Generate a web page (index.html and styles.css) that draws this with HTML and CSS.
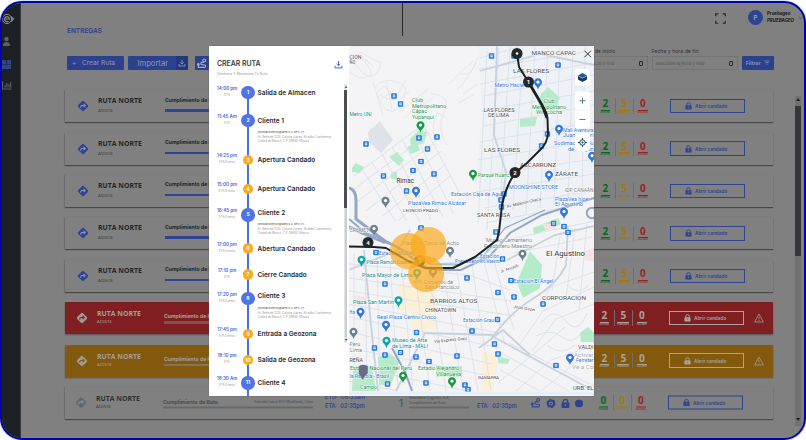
FILE: index.html
```html
<!DOCTYPE html>
<html lang="es">
<head>
<meta charset="utf-8">
<title>Entregas</title>
<link rel="stylesheet" href="styles.css">
</head>
<body>
<svg class="defs" width="0" height="0">
  <symbol id="turn" viewBox="0 0 12 12"><rect x="2" y="2" width="8" height="8" rx="1.3" transform="rotate(45 6 6)" fill="currentColor"/><path style="stroke:var(--arrow)" d="M3.8 7.8V6.500Q3.800 5.500 4.800 5.500H8M6.600 3.900L8.200 5.500L6.600 7.100" fill="none" stroke-width="1.1"/></symbol>
  <symbol id="lock" viewBox="0 0 8 9"><path d="M2 4V2.7a2 2 0 0 1 4 0V4" fill="none" stroke="currentColor" stroke-width="1.1"/><rect x=".5" y="3.6" width="7" height="5" rx=".8" fill="currentColor"/><circle class="hole" cx="4" cy="6" r=".8"/></symbol>
  <symbol id="warn" viewBox="0 0 10 10"><path d="M5 1L9.4 9H.6Z" fill="none" stroke="currentColor" stroke-width=".8" stroke-linejoin="round"/><path d="M5 3.8V6.3M5 7.2V8" stroke="currentColor" stroke-width=".8"/></symbol>
  <symbol id="load" viewBox="0 0 10 10"><path d="M5 1V6M2.9 4.3L5 6.3L7.1 4.3M1.2 6.3V8.8H8.8V6.3" fill="none" stroke="currentColor" stroke-width="1.1"/></symbol>
  <symbol id="route" viewBox="0 0 12 12"><circle cx="9" cy="2.6" r="1.6" fill="none" stroke="currentColor" stroke-width="1.1"/><circle cx="2.5" cy="7" r="1.5" fill="currentColor"/><path d="M2.5 7V10.2H9.2Q11 10 10.4 8.2Q10 7.3 8 7.3H6.3Q5 7 5.3 5.7Q5.7 4.5 7.2 4.5H9" fill="none" stroke="currentColor" stroke-width="1.2"/></symbol>
  <symbol id="bus" viewBox="-3 -3 6 6"><rect x="-2.8" y="-2.8" width="5.6" height="5.6" rx="1" fill="#2879e2"/><rect x="-1.2" y="-1.6" width="2.4" height="2.8" rx=".5" fill="#e8f1ff"/><path d="M-.8 -.2H.8" stroke="#2879e2" stroke-width=".7"/></symbol>
  <symbol id="pin" viewBox="-5 -5 10 13"><path d="M0 7Q-.5 4.5-2.6 2.8A4 4 0 1 1 2.6 2.8Q.5 4.5 0 7Z" fill="currentColor"/><circle cy="-.4" r="1.6" fill="#fff"/></symbol>
</svg>
<div class="frame">
  <nav class="side">
    <svg viewBox="0 0 18 90" width="18" height="90">
      <g fill="none" stroke="#8a8d8e"><circle cx="5" cy="9" r="4.6" stroke-width="1"/><path d="M2.5 9H7.5A2.5 2.5 0 1 0 6.5 11.2M9 6.5L11.5 9L9 11.5" stroke-width="1.2"/></g>
      <g fill="#5d6162"><circle cx="4.5" cy="29" r="2.3"/><path d="M.8 36Q1 32 4.5 32Q8 32 8.2 36Z"/></g>
      <path d="M0 50H4V53.500H5V50H9V54H0ZM0 54.500H9V59H0Z" fill="#2f448d"/>
      <path d="M.5 71V79H9.5M3 77.5V75M5 77.5V73M7 77.5V74M8.7 77.5V72" fill="none" stroke="#5d6162" stroke-width="1.1"/>
    </svg>
  </nav>
  <main class="main">
    <header class="top">
      <i class="divider"></i>
      <svg class="expand" viewBox="0 0 10 10"><path d="M3 .7H.7V3M7 .7H9.3V3M3 9.3H.7V7M7 9.3H9.3V7" fill="none" stroke="#23272a" stroke-width="1.1"/></svg>
      <b class="avatar">P</b>
      <div class="user"><b>Pruebageo</b><b><i>PRUEBAGEO</i></b></div>
      <svg class="chev" viewBox="0 0 6 4"><path d="M.5 .5L3 3L5.5 .5" fill="none" stroke="#333" stroke-width=".7"/></svg>
    </header>
    <section class="tools">
      <div class="tools-left">
        <h1>ENTREGAS</h1>
        <div class="btns">
          <div class="btn new"><span>+</span>Crear Ruta</div>
          <div class="btn imp"><span>Importar</span><i><svg width="8" height="8"><use href="#load"/></svg></i></div>
          <div class="btn ico"><svg width="11" height="11"><use href="#route"/></svg></div>
        </div>
      </div>
      <div class="filters">
        <div class="field first"><label>Fecha y hora de inicio</label><div class="input"><i>Seleccione la fecha y hora</i><em></em></div></div>
        <div class="field"><label>Fecha y hora de fin</label><div class="input"><i>Seleccione la fecha y hora</i><em></em></div></div>
        <div class="btn filter">Filtrar<svg width="6" height="6" viewBox="0 0 6 6"><path d="M.2 1H5.8M1.2 2.6H4.8M2.2 4.2H3.8" stroke="#7c88b5" stroke-width=".8"/></svg></div>
      </div>
    </section>
    <div class="body"><section class="cards" id="cards"></section>
      <div class="scroll"><span>▲</span><i></i><span class="down">▼</span></div></div>
  </main>
  <div class="modal">
    <section class="panel">
      <div class="panel-head"><div><h2>CREAR RUTA</h2><p>Gestiona Y Monitorea Tu Ruta</p></div><svg width="9" height="9"><use href="#load"/></svg></div>
      <div class="panel-body"><div class="stops" id="stops"></div><div class="track"><span>▴</span><i></i><u></u><span>▾</span></div></div>
    </section>
    <svg class="map" viewBox="349 46 245 349.5" width="245" height="349.5">
      <rect x="349" y="46" width="245" height="345.5" fill="#f4f3f5"/>
      <path d="M478 46H594V190L530 225L505 232L476 180L482 110Z" fill="#eef1f5"/>
      <path d="M368 132L380 121L393 140L381 153L369 142Z" fill="#dfe2e9"/>
      <g fill="#b4ebc8">
        <path d="M410 139L418 131L427 132L424 143L411 147Z"/><path d="M541 94L548 87L560 98L553 113L538 105Z"/><path d="M352 168L356 163L364 167L360 173L352 172Z"/><path d="M517 282L530 251L542 265L540 288L523 298Z"/><path d="M533 228L558 218L561 224L534 235Z"/><path d="M353 368L372 366L376 391H352Z"/><path d="M378 357L390 353L399 362L391 385H379Z"/><path d="M580 333L588 327L594 333V342H581Z"/><path d="M436 366H462V377H436Z"/><path d="M498 357L510 359L508 364L498 363Z"/><path d="M389 157L397 152L404 160L399 166ZM407 147L417 143L420 150L411 154ZM413 281L422 279L421 297H413ZM520 119L537 117L535 126L520 127ZM391 173L397 171V179H391Z"/>
      </g>
      <g fill="#fdf0d9"><path d="M399 283H436V311H399ZM408 314L431 309L437 329L414 333ZM482 351L498 357L493 391H482ZM402 182L412 181L420 196L407 201Z"/></g>
      <g fill="#fbe2e2"><path d="M584 252L594 247V262L585 260ZM543 224H556V229H545ZM356 295L366 298L362 307L355 303Z"/></g>
      <g fill="none" stroke="#dde2ea" stroke-width=".7">
        <path d="M350 62Q356 48 366 55T381 62Q380 73 373 76T355 64M357 60Q367 57 373 67M360 53L372 73M349 71Q360 83 372 74"/>
        <path d="M375 87Q384 77 397 82T404 96Q401 112 391 111T377 92L384 86L396 97L406 80M381 99L393 91M386 81L392 109M380 95Q396 107 409 91M400 112L428 89M404 118L433 98M373 82L383 116"/>
        <path d="M447 145Q436 129 444 112T431 94M436 145Q430 127 437 113L447 118M449 84Q459 73 473 61M457 90Q466 82 476 63M461 74Q473 77 477 57M463 94L477 84M458 103L475 94"/>
      </g>
      <g fill="none" stroke="#d6dde7" stroke-width=".75">
        <path d="M354 176L425 123M354 189L430 133M358 201L435 142M366 211L441 151M383 216L447 163M398 221L451 175M363 171L396 222M372 162L407 221M382 154L420 222M392 147L431 220M403 141L443 217M414 132L453 213M425 128L459 192"/>
        <path d="M480 58L519 47M479 69L584 52M480 84L592 63M483 96L594 75M481 111L594 91M484 126L594 105M480 142L594 122M478 160L594 140M476 176L594 159M476 192L594 174M484 208L594 191M486 223L560 208"/>
        <path d="M487 51L478 224M499 48L487 230M510 47L499 220M523 47L513 210M535 47L526 214M548 47L540 208M560 47L554 205M573 47L568 202M585 47L582 197"/>
        <path d="M349 264L469 275L510 290M349 278L511 301M349 291L515 316M349 304L499 333M349 317L500 348M349 332L492 364M349 348L490 376M349 366L467 391M349 381L398 391"/>
        <path d="M354 253V391M365 255L367 391M377 257L380 391M390 261L398 391M402 269L413 391M415 272L430 391M429 272L446 391M443 270L463 391M457 272L478 391M472 265L491 391M484 261L505 345M493 258L514 330"/>
        <path d="M500 352L569 391M500 370L540 391M509 343L594 386M499 382L530 357L565 327M516 391L551 360L594 346M541 391L580 359M520 344L543 311L594 287M532 351L556 319L594 304M542 301L551 287L594 272M507 240L594 221M514 253L592 237M560 236L552 291M575 228L566 298M587 223L579 310"/>
        <path d="M541 323Q554 306 566 321T587 313M536 336Q551 328 562 337T582 332M568 286Q579 296 589 285M547 345Q561 357 575 345"/>
      </g>
      <g fill="none" stroke="#c8d2df" stroke-width="1.8">
        <path d="M494 335Q511 312 534 298T566 265L568 227M490 335L594 391M479 348L503 330L530 355M396 391L425 333L494 335M349 270L398 250L410 230M364 250L371 325L378 391M497 46L494 135L506 172L500 220M480 71L540 54L594 65M507 260L555 235L594 226"/>
      </g>
      <g fill="none" stroke="#91a7c5">
        <path d="M349 188Q356 190 356 200V219L386 242" stroke-width="3"/>
        <path d="M349 219L368 235L395 246L430 270L461 270L490 256L510 233L542 215L594 198M349 228L385 243" stroke-width="2"/>
        <path d="M349 226L385 240L430 264L453 265L480 260L505 228L545 210" stroke-width="1.2"/>
        <path d="M392 348L405 372L412 391" stroke-width="2"/><circle cx="592" cy="213" r="5.2" stroke-width="2"/>
      </g>
      <path d="M434 264L460 263L481 257L497 244" fill="none" stroke="#9bdfed" stroke-width="1.5"/>
      <g id="labels"></g>
      <g id="marks"></g>
      <path d="M517 53L519 67L528.500 82L542 105Q547 112 547.500 119L548 134Q547 143 541 149L527 163L515 173Q505 188 502 205L499 232L497 240L475 257L453 268H425L408 261L386 248L374 247L349 246.500" fill="none" stroke="#1c2223" stroke-width="2" stroke-linejoin="round"/>
      <path d="M528.500 82L542 105L547 118" fill="none" stroke="#1c2223" stroke-width="2.800"/>
      <g class="way"><circle cx="517" cy="53.500" r="5.500"/><circle cx="528.500" cy="82" r="5.500"/><circle cx="515" cy="172.500" r="5.500"/><circle cx="420" cy="260.500" r="5.500"/><circle cx="368" cy="242.500" r="5.500"/><circle cx="517" cy="53.500" r="1.300" fill="#fff"/><text x="528.500" y="84.300">1</text><text x="515" y="174.800">2</text><text x="420" y="262.800">3</text><text x="368" y="244.800">4</text></g>
      <g fill="#fba91c" fill-opacity=".7"><circle cx="408" cy="251" r="18"/><circle cx="428.500" cy="245" r="18"/><circle cx="426" cy="274" r="18"/></g>
      <path d="M362.500 379Q362 375 359.500 373.500V366.500Q362.500 364.500 367 366.500V373Q363.500 375 362.500 379Z" fill="#696d88" stroke="#696d88" stroke-width="1.500"/>
      <rect x="349" y="391.500" width="245" height="4" fill="#e6eef8"/>
      <g fill="#fff"><rect x="575" y="69" width="15" height="17" rx="3"/><rect x="575" y="91.500" width="15" height="37" rx="3"/><rect x="575" y="133" width="15" height="18" rx="3"/></g>
      <path d="M575 110H590" stroke="#dce1e8" stroke-width=".5"/>
      <path d="M582.500 73L587 75.500L582.500 78L578 75.500Z" fill="#1d5796"/><path d="M578 76V79.500L582.500 82L587 79.500V76L582.500 78.500Z" fill="#17375e"/>
      <g fill="none" stroke="#426c93" stroke-width=".9"><path d="M579.500 100.700H585.500M582.500 97.700V103.700M579.500 119.500H585.500"/></g>
      <g fill="none" stroke="#1e4266" stroke-width="1"><circle cx="582.500" cy="142.500" r="2.700"/><path d="M582.500 138V140M582.500 145V147M578 142.500H580M585 142.500H587"/></g><circle cx="582.500" cy="142.500" r="1" fill="#1e4266"/>
      <path d="M584.500 50.700L591 57.200M591 50.700L584.500 57.200" stroke="#333" stroke-width="1"/>
    </svg>
  </div>
</div>
<script src="script.js"></script>
</body>
</html>
```
FILE: styles.css
```css
* { box-sizing: border-box; margin: 0; padding: 0; }
body { width: 806px; height: 440px; background: #fff; overflow: hidden; font-family: Inter, "Liberation Sans", sans-serif; }
svg { display: block; flex: none; }
.defs { position: absolute; }
.frame { position: relative; width: 806px; height: 439px; margin-top: 1px; border: 2px solid #0204a8; border-radius: 22px; background: #808080; display: flex; overflow: hidden; box-shadow: 0 0 0 1px #cfe0f0; }
.side { width: 19px; background: #1a2023; border-right: 1px solid #343b3e; padding-top: 7px; flex: none; }
.main { flex: 1; display: flex; flex-direction: column; min-width: 0; }
.top { height: 34px; display: flex; align-items: flex-start; flex: none; }
.divider { width: 1px; height: 33px; background: #292929; margin-left: 381px; }
.expand { width: 11px; height: 11px; margin: 10px 0 0 312px; }
.avatar { width: 15px; height: 15px; border-radius: 50%; background: #2e4492; color: #969dba; font-size: 6px; line-height: 15px; text-align: center; margin: 7px 0 0 22px; }
.user { display: flex; flex-direction: column; font-size: 4.400px; line-height: 6.700px; color: #15191b; margin: 8px 0 0 4px; width: 29px; white-space: nowrap; }
.chev { width: 5px; height: 4px; margin: 13px 0 0 2px; }
.tools { display: flex; justify-content: space-between; height: 53.500px; margin: -10px 30px 0 46px; flex: none; }
h1 { font-size: 6.500px; line-height: 9px; font-weight: 600; color: #2b408c; }
.btns { display: flex; gap: 4.500px; margin-top: 20px; }
.btn { height: 14px; background: #2c418d; color: #9199b6; font-size: 6px; display: flex; align-items: center; border-radius: 1px; white-space: nowrap; }
.new { width: 56.500px; padding-left: 5px; gap: 5.500px; font-size: 6.600px; }
.imp { width: 60px; justify-content: space-between; padding-left: 9.500px; font-size: 7.600px; }
.imp i { width: 12px; height: 14px; background: #24377a; display: flex; align-items: center; justify-content: center; }
.ico { width: 14px; margin-left: 2px; justify-content: center; color: #a9aec2; }
.filters { display: flex; align-items: flex-end; gap: 3.500px; padding-bottom: 11px; }
.field { width: 86.500px; }
.field label { font-size: 5.200px; line-height: 8px; color: #303436; display: block; white-space: nowrap; }
.input { height: 14px; border: 1px solid #747474; margin-top: 1px; display: flex; align-items: center; justify-content: space-between; padding: 1px 4.500px 0 3px; font-size: 3.900px; color: #505050; white-space: nowrap; }
.input em { width: 4px; height: 5px; border: .8px solid #2c2c2c; border-radius: 1px; }
.filter { width: 32.500px; justify-content: center; gap: 3px; font-size: 5.300px; font-weight: 600; }
.body { display: flex; justify-content: space-between; margin: 9.700px 3px 0 44px; }
.cards { width: 708px; display: flex; flex-direction: column; gap: 10.400px; }
.card { --arrow: #8b93af; height: 32px; display: grid; grid-template-columns: 12px 65px 161px 86px 10px 68px 53px 64px 64px 75px 10px; align-items: center; padding-left: 12px; color: #20272a; box-shadow: 0 1px 1px #484848, -1px 0 1px #747474; }
.card > * { white-space: nowrap; }
.turn { color: #2e4492; width: 12px; height: 12px; }
.name { padding-left: 9px; font-family: "Open Sans", sans-serif; }
.name b { display: block; font-size: 6.900px; line-height: 9px; }
.name small { display: block; font-size: 4px; line-height: 10px; margin-top: 1px; color: #33393c; font-family: Lato, sans-serif; }
.prog { font-size: 5.100px; line-height: 8px; padding-left: 11px; margin-top: -5px; }
.prog div { display: flex; justify-content: space-between; }
.prog small { font-size: 3.600px; }
.bar { display: block; height: 2.500px; background: #2e4492; }
.prog .bar { margin-top: 5.500px; }
.eta { font-size: 5.600px; line-height: 9.500px; font-weight: 600; color: #2e4492; padding-left: 12px; margin-top: -1px; }
.eta.r { padding-left: 0; }
.eta span { display: block; }
.one { font-size: 10px; }
.client { font-size: 3.500px; line-height: 4.500px; width: 60px; }
.client .bar { margin-top: 1.500px; }
.ics { display: flex; gap: 5px; color: #2e4492; align-items: center; margin-top: 2px; }
.nums { display: grid; grid-template-columns: 18.500px 18.500px 18.500px; text-align: center; }
.nums span { display: flex; flex-direction: column; align-items: center; border-left: .7px solid #6e6e6e; }
.nums span:first-child { border-left: 0; }
.nums b { font: 700 10px/11px "Open Sans", sans-serif; }
.nums small { font-size: 2.100px; line-height: 3px; font-weight: 700; border-top: .5px solid; margin-top: .5px; }
.g { color: #07661d; } .y { color: #a17909; } .r0 { color: #9f1d21; }
.open { height: 14.500px; width: 75px; margin-left: 10px; border: 1px solid #2e4492; color: #2e4492; display: flex; align-items: center; padding-left: 14px; gap: 3px; font-size: 4.700px; font-weight: 600; }
.hole { fill: #777; }
.warn { margin-left: 20px; }
.red, .amber { color: #a3a09d; box-shadow: 0 1px 1.500px #555; padding-left: 11px; }
.red { --arrow: #801f21; background: #801f21; } .amber { --arrow: #82590d; background: #82590d; }
.red .turn, .amber .turn { color: #a29c99; }
.red .name small, .amber .name small, .red .nums span, .amber .nums span { color: #aaa49b; }
.red .open, .amber .open { color: #aaa39d; border-color: #aaa39d; }
.red .bar { background: #845052; } .amber .bar { background: #86745a; }
.red .prog, .amber .prog { margin-top: 0; }
.red .prog .bar, .amber .prog .bar { margin-top: 1px; }
.red .name b, .amber .name b, .gray .name b { line-height: 8px; }
.red .name small, .amber .name small, .gray .name small { line-height: 6.500px; }
.gray { padding-left: 10px; }
.gray > * { transform: translateY(-.5px); }
.gray .turn { color: #626667; }
.gray .prog { color: #484d50; margin-top: 1px; }
.gray .prog .bar { background: #666869; margin-top: 1px; }
.gray .bar { background: #666869; }
.gray .name b { color: #2c3234; }
.gray .one, .gray .client { color: #45494b; }
.scroll { width: 6px; height: 330px; margin-top: 6px; background: #727272; display: flex; flex-direction: column; font-size: 4px; text-align: center; color: #181818; }
.scroll span { height: 10px; line-height: 8px; }
.scroll i { height: 150px; background: #35373a; }
.scroll .down { margin-top: auto; }
.modal { position: absolute; left: 207px; top: 43px; width: 385px; height: 349.500px; background: #fff; display: flex; box-shadow: 0 0 1px #555; }
.panel { width: 140px; flex: none; overflow: hidden; display: flex; flex-direction: column; }
.panel-head { display: flex; justify-content: space-between; height: 37px; padding: 14px 6px 0 8px; color: #4266de; flex: none; }
h2 { font-size: 6.900px; line-height: 8px; font-weight: 600; color: #343a42; }
.panel-head p { font-size: 3.600px; line-height: 4px; color: #999; margin-top: 3.500px; }
.panel-body { display: flex; justify-content: space-between; height: 312px; padding: 2.500px 2px 0 7px; position: relative; }
.stop { display: grid; grid-template-columns: 22px 20px 84px; background: linear-gradient(#4b6fe5, #4b6fe5) 31px 0 / 2px 100% no-repeat; }
.stop:first-child { background-position: 31px 7px; }
.time { font-size: 4.500px; line-height: 6px; font-weight: 600; color: #4167e4; text-align: center; white-space: nowrap; }
.time small { display: block; font-size: 3px; line-height: 6px; color: #999; font-weight: 400; }
.dot { width: 13.500px; height: 13.500px; border-radius: 50%; background: #5073e5; color: #fff; font-size: 5px; line-height: 13.500px; text-align: center; font-weight: 700; justify-self: center; }
.dot.o { background: #fcab1c; width: 10.500px; height: 10.500px; line-height: 10.500px; margin-top: 1.500px; }
.info { white-space: nowrap; margin-left: -.5px; }
.info b { display: block; font-size: 6.500px; line-height: 14px; font-weight: 600; color: #252a30; }
.info strong { display: block; font-size: 2.700px; line-height: 5px; margin-top: 2.500px; color: #555; font-weight: 500; }
.info p { font-size: 2.800px; line-height: 4.300px; color: #999; }
.info.up b { margin-top: -2.500px; }
.track { width: 3px; height: 259px; margin-top: -2px; background: #e2e3e5; display: flex; flex-direction: column; font-size: 4px; color: #333; text-align: center; flex: none; }
.track span { height: 6px; line-height: 5px; }
.track i { height: 118px; background: #4c4e52; }
.track u { flex: 1; background: #cbcdd1; margin: 0 .5px; }
.map { overflow: hidden; font-family: Roboto, sans-serif; }
.map text { font-size: 5.400px; }
.halo { paint-order: stroke; stroke: #fff; stroke-width: 1px; stroke-opacity: .8; }
.way { fill: #23282a; }
.way text { fill: #fff; font-weight: 700; font-size: 6px; text-anchor: middle; }
```
FILE: script.js
```js
const use = (id, w, h, cls = '') => `<svg class="${cls}" width="${w}" height="${h}"><use href="#${id}"/></svg>`;
const kinds = ['', '', '', '', '', 'red', 'amber', 'gray'];
document.getElementById('cards').innerHTML = kinds.map(k => {
  const full = k === 'gray';
  const n = full ? [0, 0, 0] : [2, 5, 0];
  const middle = full ? `<div class="eta"><span>ETD: &nbsp;08:35am</span><span>ETA: &nbsp;02:35pm</span></div>
  <div class="one">1</div><div class="client">Innovative Logistics S.A.<br>Cumplimiento de Ruta<i class="bar"></i></div>
  <div class="eta r"><span>&nbsp;</span><span>ETA: &nbsp;02:35pm</span></div>
  <div class="ics">${use('route', 11, 11)}<svg width="10" height="10" viewBox="0 0 10 10"><circle cx="5" cy="5" r="3" fill="none" stroke="currentColor" stroke-width="2"/><circle cx="5" cy="5" r="4.200" fill="none" stroke="currentColor" stroke-dasharray="2 2.400"/><circle cx="5" cy="5" r="1" fill="currentColor"/></svg>${use('lock', 9, 10)}<svg width="8" height="8"><circle cx="4" cy="4" r="4" fill="currentColor"/></svg></div>`
    : '<div></div><div></div><div></div><div></div><div></div>';
  return `<article class="card ${k}">${use('turn', 12, 12, 'turn')}
  <div class="name"><b>RUTA NORTE</b><small>AC0574</small></div>
  <div class="prog"><div><b>Cumplimiento de Ruta</b>${full ? '<small>Avenida Larco 813 Miraflores, Lima</small>' : ''}</div><i class="bar"></i></div>
  ${middle}
  <div class="nums"><span class="g"><b>${n[0]}</b><small>EXITOSO</small></span><span class="y"><b>${n[1]}</b><small>PENDIENTE</small></span><span class="r0"><b>${n[2]}</b><small>FALLIDOS</small></span></div>
  <div class="open">${use('lock', 7, 8)}Abrir candado</div>
  ${k === 'red' || k === 'amber' ? use('warn', 10, 10, 'warn') : ''}</article>`;
}).join('');

const stops = [
  ['14:00 pm', 'ETA', 'Salida de Almacen', 28], ['11:45 Am', 'ETA', 'Cliente 1', 39.5],
  ['14:25 pm', 'ETA Evento', 'Apertura Candado', 29], ['15:00 pm', 'ETA Evento', 'Apertura Candado', 26],
  ['16:45 pm', 'ETA Evento', 'Cliente 2', 33.5], ['17:00 pm', 'ETA Evento', 'Abertura Candado', 26],
  ['17:10 pm', 'ETA', 'Cierre Candado', 24], ['17:20 pm', 'ETA Evento', 'Cliente 3', 35.5],
  ['17:45 pm', 'ETA Evento', 'Entrada a Geozona', 26], ['18:10 pm', 'ETA', 'Salida de Geozona', 23],
  ['18:30 Am', 'ETA Evento', 'Cliente 4', 20]];
document.getElementById('stops').innerHTML = stops.map(([t, e, name, h], i) => {
  const big = i === 0 || name.startsWith('Cliente');
  const more = big && i && i < 10 ? '<strong>(Innovaciones Digitales S.A. de C.V.)</strong><p>Av. Reforma 1234, Colonia Juárez, Alcaldía Cuauhtémoc,<br>Ciudad de México, C.P. 06600, México</p>' : '';
  return `<div class="stop" style="height:${h}px"><div class="time">${t}<small>${e}</small></div><div class="dot ${big ? '' : 'o'}">${i + 1}</div><div class="info ${i === 4 || i === 7 ? 'up' : ''}"><b>${name}</b>${more}</div></div>`;
}).join('');

const D = '#4a4f55', G = '#239a4d', B = '#3379dc', T = '#168b99', S = '#7a8790', K = '#2e3338';
const labels = [
  ['CIÓN', 349.5, 59, 12, D], ['ÑO', 349.5, 64.3, 6, D], ['Metro UNI', 349.5, 115.5, 22, T],
  ['Club', 412, 102, 11, G], ['Metropolitano', 412, 107.8, 34, G], ['Cápac', 412, 113.3, 15, G], ['Yupanqui', 412, 119, 22, G],
  ['Rimac', 396.5, 183, 17.5, K, 0, 7], ['PlazaVea Rimac Alcázar', 408, 204.5, 58, B], ['LEONCIO PRADO', 403, 212.3, 35, D, 0, 4.3],
  ['Estación Caja de Agua', 451, 195.5, 53, B], ['Parque Huancayo', 478, 177.3, 39, G],
  ['MANCO CAPAC', 531.5, 54.8, 44.5, D], ['LAS FLORES', 513, 72.7, 36, D], ['Metro Hacienda', 494.5, 87, 38, B],
  ['Club', 543.5, 103, 11, G], ['Metropolitano', 532, 108.5, 34, G], ['Wiracocha', 536, 114, 26, G],
  ['LAS FLORES', 483.5, 112, 31, D, 0, 4.7], ['DE LIMA', 488, 116.8, 21, D, 0, 4.7], ['LAS FLORES', 484, 151.7, 36, D], ['ASCARRUNZ', 520, 167, 36, D],
  ['Mall Aventura', 563, 131.5, 30.5, B], ['Juan de Luri', 563, 137, 30.5, B], ['Sodimac San Ju', 554, 145.3, 39.5, B], ['de Lurigan', 568, 151, 25.5, B],
  ['ZÁRATE', 555, 175.5, 23, D], ['MOONSHINE STORE', 509, 188.6, 49, B, 0, 4.8], ['IDP CANAÁN', 565, 192, 28.5, S],
  ['Av. Malecón Checa', 507, 208, 35, D, -13, 4.2], ['PlazaVea hiper', 555, 201, 35, B], ['El Agustino', 555, 206.3, 28, B], ['SANTA ROSA', 477, 217, 33, D, 0, 4.9],
  ['CROMET', 349.5, 232.3, 19.5, S, 0, 5], ['Plaza de Toros de Acho', 402, 245, 57, S], ['Estación Moisés', 379, 254.7, 34, B], ['Plaza Ramón Castilla', 366.5, 264.4, 47, T], ['Plaza Mayor de Lima', 362, 277, 50.5, T],
  ['Convento de', 424, 283.8, 29, S], ['San Francisco', 425, 289.3, 34, S], ['Presbítero', 455, 262.5, 24, B],
  ['Plaza San Martín', 353, 304.3, 41, T], ['BARRIOS ALTOS', 430, 302.8, 47.5, D], ['CHINATOWN', 425, 312.3, 31, D, 0, 4.6], ['ña', 349.5, 314, 5.5, B],
  ['Real Plaza Centro Cívico', 377, 319, 59, B], ['Estación Grau', 463, 321.5, 31, B], ['Perú', 349.5, 345.7, 10.5, S], ['Lima', 350, 351.5, 12, S],
  ['Museo de Arte', 392, 341.7, 35, T], ['de Lima - MALI', 392, 347.8, 36, T], ['Vía Express Grau', 434, 343, 33, D, -6, 4.2],
  ['REÑA', 349.5, 361.7, 13.5, D], ['Estadio Nacional del Perú', 350, 369.5, 62, G], ['Estadio Alejandro', 418, 369.5, 41, G], ['Villanueva', 436, 375.5, 25, G],
  ['la Rambla - Brasil', 349.5, 378, 39.5, B], ['Campo', 360, 388.5, 17, G],
  ['Museo Cementerio', 486, 242, 46, S], ['Presbítero Maestro', 484, 247.5, 48, S], ['Estación', 480, 258, 19, B, 0, 4.6], ['ero Maestro', 480, 262.7, 20, B, 0, 4.6],
  ['El Agustino', 546, 256, 39, K, 0, 7], ['Jr. Ancash', 501, 273, 19, D, -20, 4.2], ['Estación El Ángel', 513.5, 282.5, 39.5, B],
  ['CORPORACION', 542, 300.3, 44, D], ['Jirón Girón', 513, 308, 22, D, 9, 4.2], ['VALDI', 578, 349, 15.5, D, 0, 5],
  ['Activar', 574, 356.5, 19.5, '#a8acb1', 0, 6], ['Ferreter', 576, 361.8, 17.5, B, 0, 4.6], ['Ve a Co', 572, 368.5, 21.5, '#a8acb1', 0, 5], ['GAMARRA', 478, 379, 21, D, 0, 4.2], ['URB. EL', 573, 390, 20.5, D, 0, 5]];
document.getElementById('labels').innerHTML = labels.map(([t, x, y, w, c, r = 0, s = 5.4]) =>
  `<text class="halo" x="${x}" y="${y}" textLength="${w}" lengthAdjust="spacingAndGlyphs" fill="${c}" transform="rotate(${r} ${x} ${y})" style="font-size:${s}px">${t}</text>`).join('');

const bus = [[394,96],[400.5,104],[419,138],[437,137],[427.5,149],[421,161.5],[413,170.5],[434,174],[383.5,176],[366,144],[406.5,191],[491.5,56],[514,56],[558,65],[547.5,134],[541.5,146],[504,194],[501,200],[501.5,207],[376,252.5],[385,284],[467,278],[421,228],[416.5,332.5],[374.5,348],[385,355],[400.5,352.5],[416,357],[429,361.5],[457,356],[472,331],[387.5,384],[426,383],[465,385],[553.5,223.5],[564,226.5],[568,232.5],[496,232],[502.5,259],[511,280.5],[498,292.5],[514,297],[543,304],[497.5,319.5],[494.5,344],[498,354],[556,365.5],[468,389.5]];
const pins = [[420.5,125.5,'#189a45'],[473,174,'#189a45'],[416,191,B],[385.5,201,'#6c8190'],[538,82.5,B],[559,129,B],[592,156,B],[549,175,B],[564,212,B],[374,229,'#6c8190'],[450,251,'#6c8190'],[361.5,260,'#10a5ac'],[417,273,'#10a5ac'],[433,272,'#6c8190'],[398.5,300.5,'#10a5ac'],[360.5,312,B],[386,325,B],[353.5,332,'#6c8190'],[386.5,341,'#10a5ac'],[403,376,'#189a45'],[452,381.5,'#189a45'],[522.5,254,'#6c8190'],[570,358,B]];
document.getElementById('marks').innerHTML =
  bus.map(([x, y]) => `<use href="#bus" x="${x - 3}" y="${y - 3}" width="6" height="6"/>`).join('') +
  pins.map(([x, y, c]) => `<use href="#pin" x="${x - 5}" y="${y - 5}" width="10" height="13" color="${c}"/>`).join('');
```
